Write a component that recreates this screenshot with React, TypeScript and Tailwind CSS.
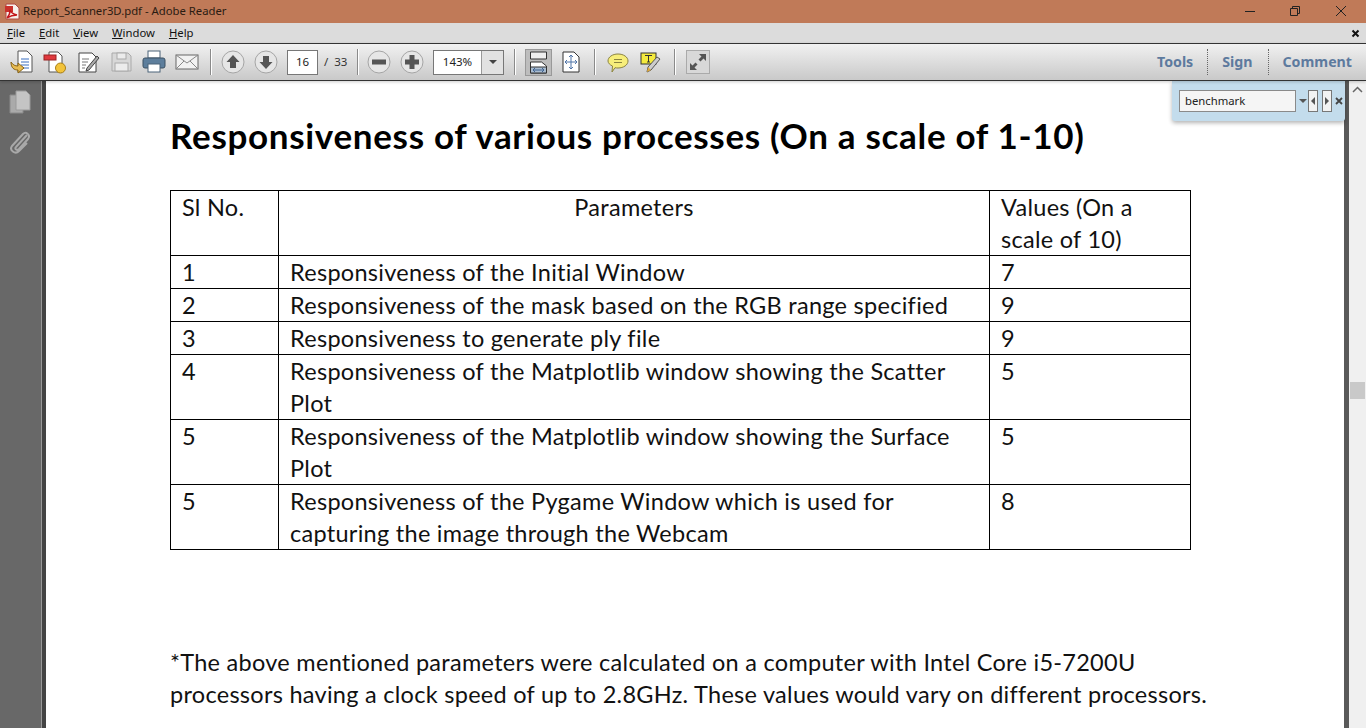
import React from 'react';

const sans = 'font-["Noto_Sans","Open_Sans",sans-serif]';

const ROWS: [string, React.ReactNode, string][] = [
  ['1', 'Responsiveness of the Initial Window', '7'],
  ['2', 'Responsiveness of the mask based on the RGB range specified', '9'],
  ['3', 'Responsiveness to generate ply file', '9'],
  ['4', <>Responsiveness of the Matplotlib window showing the Scatter<br />Plot</>, '5'],
  ['5', <>Responsiveness of the Matplotlib window showing the Surface<br />Plot</>, '5'],
  ['5', <>Responsiveness of the Pygame Window which is used for<br />capturing the image through the Webcam</>, '8'],
];

function Round({ up }: { up?: boolean }) {
  return (
    <svg width="24" height="24" viewBox="0 0 24 24">
      <circle cx="12" cy="12" r="11" fill="#e6e6e6" stroke="#a5a5a5" />
      <path d={up ? 'M12 5l6.5 7H15v6H9v-6H5.500z' : 'M12 19l6.500-7H15V6H9v6H5.500z'} fill="#555" />
    </svg>
  );
}

function Zoom({ plus }: { plus?: boolean }) {
  return (
    <svg width="24" height="24" viewBox="0 0 24 24">
      <circle cx="12" cy="12" r="11" fill="#e6e6e6" stroke="#a5a5a5" />
      {plus && <rect x="9.500" y="5" width="5" height="14" fill="#555" />}
      <rect x="5" y="9.500" width="14" height="5" fill="#555" />
    </svg>
  );
}

function Sep() {
  return <div className="w-px h-[26px] bg-[#8a8a8a] border-r border-white box-content" />;
}

export default function App() {
  return (
    <div className={`w-[1366px] h-[728px] overflow-hidden flex flex-col bg-white ${sans}`}>
      {/* title bar */}
      <div className="h-[23px] shrink-0 bg-[#c07a58] flex items-center pl-[5px] text-[11.3px] text-[#2a1a12]">
        <svg width="15" height="17" viewBox="0 0 15 17" className="mr-[3px]">
          <path d="M1 1h9l4 4v11H1z" fill="#f6f0ec" stroke="#b04a45" />
          <path d="M0 3h8v6H0z" fill="#c9302c" />
          <path d="M2 15c2-2 3-5 3-8 1 3 3 4 7 5-4 0-7 1-10 3z" fill="none" stroke="#c4161c" strokeWidth="1.400" />
        </svg>
        <span>Report_Scanner3D.pdf - Adobe Reader</span>
        <div className="ml-auto flex items-center -mt-[2px]">
          <svg width="12" height="12" viewBox="0 0 12 12" className="mr-[33px]"><path d="M1 6.500h10" stroke="#222" /></svg>
          <svg width="12" height="12" viewBox="0 0 12 12" className="mr-[34px]"><path d="M1.500 3.500h7v7h-7zM3.500 3.500v-2h7v7h-2" fill="none" stroke="#222" /></svg>
          <svg width="12" height="12" viewBox="0 0 12 12" className="mr-[19px]"><path d="M1 1l10 10M11 1L1 11" stroke="#222" /></svg>
        </div>
      </div>

      {/* menu bar */}
      <div className="h-[20px] shrink-0 bg-[#dcdcdc] flex items-center pl-[7px] gap-[14px] text-[11.3px] text-[#111]">
        <span><u>F</u>ile</span>
        <span><u>E</u>dit</span>
        <span><u>V</u>iew</span>
        <span><u>W</u>indow</span>
        <span><u>H</u>elp</span>
        <svg width="9" height="9" viewBox="0 0 9 9" className="ml-auto mr-[6px]"><path d="M1.500 1.500l6 6M7.500 1.500l-6 6" stroke="#111" strokeWidth="2" /></svg>
      </div>

      {/* toolbar */}
      <div className="h-[38px] shrink-0 border-y border-[#333] bg-gradient-to-b from-[#f1f1f1] to-[#c9c9c9] shadow-[0_1px_3px_rgba(0,0,0,0.2)] flex items-center pl-[10px] relative z-10">
        <div className="flex items-center gap-[9px]">
          <svg width="24" height="24" viewBox="0 0 24 24"><path d="M8 1h9l5 5v16H8z" fill="#fff" stroke="#555" /><path d="M11 9h8M11 12h8M11 15h8M13 18h6" stroke="#3a6fc0" /><path d="M1 12c0 6 3 8 7 8v3l6-5-6-5v3c-3 0-5-1-7-4z" fill="#e8bc52" stroke="#8a6414" /></svg>
          <svg width="24" height="24" viewBox="0 0 24 24"><path d="M6 2h9l4 4v16H6z" fill="#fff" stroke="#555" /><rect x="1" y="5" width="12" height="5" fill="#e0393e" stroke="#922" /><circle cx="17.500" cy="18" r="5" fill="#f2c33a" stroke="#a97f18" /></svg>
          <svg width="24" height="24" viewBox="0 0 24 24"><path d="M3 3h13l4 4v15H3z" fill="#fff" stroke="#444" /><path d="M6 9h7M6 12h6M6 15h4M6 18h3" stroke="#777" /><path d="M11 18l10-12 2 2-10 12-3 1z" fill="#aaa" stroke="#444" /></svg>
          <svg width="24" height="24" viewBox="0 0 24 24"><path d="M3 3h16l3 3v15H3z" fill="#d8d8d8" stroke="#aaa" /><rect x="8" y="3" width="9" height="6" fill="#ececec" stroke="#aaa" /><rect x="6" y="13" width="13" height="8" fill="#ececec" stroke="#aaa" /></svg>
          <svg width="24" height="24" viewBox="0 0 24 24"><rect x="6" y="1" width="12" height="7" fill="#fff" stroke="#4a6378" /><rect x="1" y="8" width="22" height="10" rx="2" fill="#5d7e9c" stroke="#3c5163" /><rect x="6" y="14" width="12" height="8" fill="#fff" stroke="#4a6378" /></svg>
          <svg width="24" height="24" viewBox="0 0 24 24"><rect x="1" y="5" width="22" height="14" fill="#f2f2f2" stroke="#666" /><path d="M1 5l11 8 11-8M1 19l8-8M23 19l-8-8" fill="none" stroke="#888" /></svg>
        </div>
        <div className="ml-[11px] mr-[9px]"><Sep /></div>
        <Round up />
        <div className="w-[9px]" />
        <Round />
        <div className="ml-[9px] w-[31px] h-[25px] bg-white border border-[#777] flex items-center justify-center text-[11.5px] text-[#222]">16</div>
        <span className="ml-[6px] text-[11.5px] text-[#333] w-[32px] whitespace-pre">/  33</span>
        <div className="ml-[1px] mr-[8px]"><Sep /></div>
        <Zoom />
        <div className="w-[9px]" />
        <Zoom plus />
        <div className="ml-[9px] w-[71px] h-[25px] bg-white border border-[#777] flex text-[11.5px] text-[#222]">
          <div className="w-[47px] flex items-center justify-center">143%</div>
          <div className="flex-1 bg-[#e2e2e2] border-l border-[#999] flex items-center justify-center">
            <div className="w-0 h-0 border-x-[4px] border-x-transparent border-t-[4px] border-t-[#444]" />
          </div>
        </div>
        <div className="ml-[10px] mr-[9px]"><Sep /></div>
        <div className="w-[27px] h-[27px] bg-[#bdbdbd] border border-[#999] flex items-center justify-center">
          <svg width="19" height="23" viewBox="0 0 19 23"><path d="M1.500 1h16v7h-16z" fill="#eee" stroke="#333" /><path d="M1.500 11h11l5 4v7h-16z" fill="#fff" stroke="#333" /><path d="M1.500 16h16v6h-16z" fill="#a9bcd0" stroke="#333" /><path d="M4 19h11M4 19l2-2M4 19l2 2M15 19l-2-2M15 19l-2 2" stroke="#3d618f" fill="none" /></svg>
        </div>
        <div className="w-[9px]" />
        <svg width="20" height="24" viewBox="0 0 20 24"><path d="M2 2h11l5 5v15H2z" fill="#fff" stroke="#333" /><path d="M10 5v14M4 12h12M10 5l-2 2M10 5l2 2M10 19l-2-2M10 19l2-2M4 12l2-2M4 12l2 2M16 12l-2-2M16 12l-2 2" stroke="#4f74a8" fill="none" /></svg>
        <div className="ml-[13px] mr-[11px]"><Sep /></div>
        <svg width="22" height="22" viewBox="0 0 22 22"><path d="M11 3c5.500 0 10 3 10 7s-4.500 7-10 7c-1 0-2 0-3-.3L5 21l.5-6C3 14 1 12 1 10c0-4 4.500-7 10-7z" fill="#f7ee7a" stroke="#8a8340" /><path d="M7 8.500h8M7 11.500h8" stroke="#8a8340" /></svg>
        <div className="w-[11px]" />
        <svg width="22" height="22" viewBox="0 0 22 22"><rect x="1" y="2" width="15" height="11" fill="#f4ea3e" stroke="#333" /><path d="M5 4.500h7M8.500 4.500V11M7 11h3" stroke="#333" fill="none" /><path d="M8 16l9-10 3 2-9 11-4 2z" fill="#ccc" stroke="#555" /><path d="M7 21l1-5 3 3z" fill="#e0a93a" /></svg>
        <div className="ml-[12px] mr-[10px]"><Sep /></div>
        <div className="w-[24px] h-[24px] bg-[#d8d8d8] border border-[#aaa] flex items-center justify-center">
          <svg width="20" height="20" viewBox="0 0 20 20"><path d="M11 2h7v7l-2.500-2.500-3 3-2-2 3-3zM9 18H2v-7l2.500 2.500 3-3 2 2-3 3z" fill="#555" /></svg>
        </div>
        <div className="ml-auto flex items-center h-[28px] pr-[14px] text-[14.2px] font-bold text-[#5d7a9e]">
          <span className="pr-[14px]">Tools</span>
          <div className="h-[26px] border-l border-dotted border-[#666]" />
          <span className="pl-[14px] pr-[15px]">Sign</span>
          <div className="h-[26px] border-l border-dotted border-[#666]" />
          <span className="pl-[14px]">Comment</span>
        </div>
      </div>

      <div className="flex-1 flex min-h-0 relative">
        {/* left nav */}
        <div className="w-[41px] shrink-0 bg-[#686868] flex flex-col items-center pt-[9px] gap-[16px] pr-[1px]">
          <svg width="22" height="24" viewBox="0 0 22 24"><path d="M1 5h13v18H1z" fill="#aaa" stroke="#8a8a8a" /><path d="M7 1h10l4 4v15H7z" fill="#c4c4c4" stroke="#9a9a9a" /></svg>
          <svg width="22" height="24" viewBox="0 0 22 24"><path d="M18 5L7 17c-2 2 1 4 3 2L19 9c3-4-2-8-5-5L3 16c-3 4 3 9 7 5l8-8" fill="none" stroke="#a9a9a9" strokeWidth="2" /></svg>
        </div>
        <div className="w-[5px] shrink-0 bg-[#444] border-l border-[#999]" />

        {/* page */}
        <div className="flex-1 bg-white pl-[124px] pt-[34px] font-['Lato','Liberation_Sans',sans-serif] text-[#111]">
          <h1 className="text-[35px] leading-[40px] font-bold text-black tracking-[0.68px] whitespace-nowrap">Responsiveness of various processes (On a scale of 1-10)</h1>
          <table className="mt-[35px] w-[1020px] table-fixed border-collapse text-[23.5px] leading-[32px] tracking-[0.28px]">
            <colgroup>
              <col className="w-[108px]" />
              <col className="w-[711px]" />
              <col className="w-[201px]" />
            </colgroup>
            <tbody>
              <tr>
                <td className="border border-black pl-[11px] align-top">Sl No.</td>
                <td className="border border-black text-center align-top">Parameters</td>
                <td className="border border-black pl-[11px] align-top">Values (On a<br />scale of 10)</td>
              </tr>
              {ROWS.map(([n, label, value], i) => (
                <tr key={i}>
                  <td className="border border-black pl-[11px] align-top">{n}</td>
                  <td className="border border-black pl-[11px] align-top">{label}</td>
                  <td className="border border-black pl-[11px] align-top">{value}</td>
                </tr>
              ))}
            </tbody>
          </table>
          <p className="mt-[96px] text-[23.5px] leading-[32px] tracking-[0.28px] whitespace-nowrap">
            *The above mentioned parameters were calculated on a computer with Intel Core i5-7200U<br />
            processors having a clock speed of up to 2.8GHz. These values would vary on different processors.
          </p>
        </div>

        {/* scrollbar */}
        <div className="w-[5px] shrink-0 bg-[#595959]" />
        <div className="w-[17px] shrink-0 bg-[#f0f0f0] relative">
          <svg width="17" height="17" viewBox="0 0 17 17" className="absolute top-0 left-0"><path d="M4 11l4.500-4.500L13 11" fill="none" stroke="#666" strokeWidth="1.500" /></svg>
          <div className="absolute left-[1px] top-[301px] w-[15px] h-[17px] bg-[#c9c9c9]" />
        </div>

        {/* find panel */}
        <div className="absolute left-[1172px] top-0 w-[173px] h-[40px] bg-[#c3dcec] rounded-b-[3px] shadow-[0_2px_4px_rgba(0,0,0,0.3)] flex items-center pl-[7px]">
          <div className="w-[117px] h-[22px] bg-[#f5f5f5] border border-[#8a8a8a] flex items-center pl-[5px] text-[11.3px] text-[#222]">benchmark</div>
          <div className="ml-[3px] w-0 h-0 border-x-[4px] border-x-transparent border-t-[4px] border-t-[#555]" />
          <div className="ml-[1px] w-[10px] h-[22px] bg-[#f2f2f2] border border-[#777] flex items-center justify-center">
            <div className="w-0 h-0 border-y-[4px] border-y-transparent border-r-[4px] border-r-[#555]" />
          </div>
          <div className="ml-[4px] w-[10px] h-[22px] bg-[#f2f2f2] border border-[#777] flex items-center justify-center">
            <div className="w-0 h-0 border-y-[4px] border-y-transparent border-l-[4px] border-l-[#555]" />
          </div>
          <svg width="8" height="8" viewBox="0 0 8 8" className="ml-[3px]"><path d="M1 1l6 6M7 1L1 7" stroke="#444" strokeWidth="1.800" /></svg>
        </div>
      </div>
    </div>
  );
}
